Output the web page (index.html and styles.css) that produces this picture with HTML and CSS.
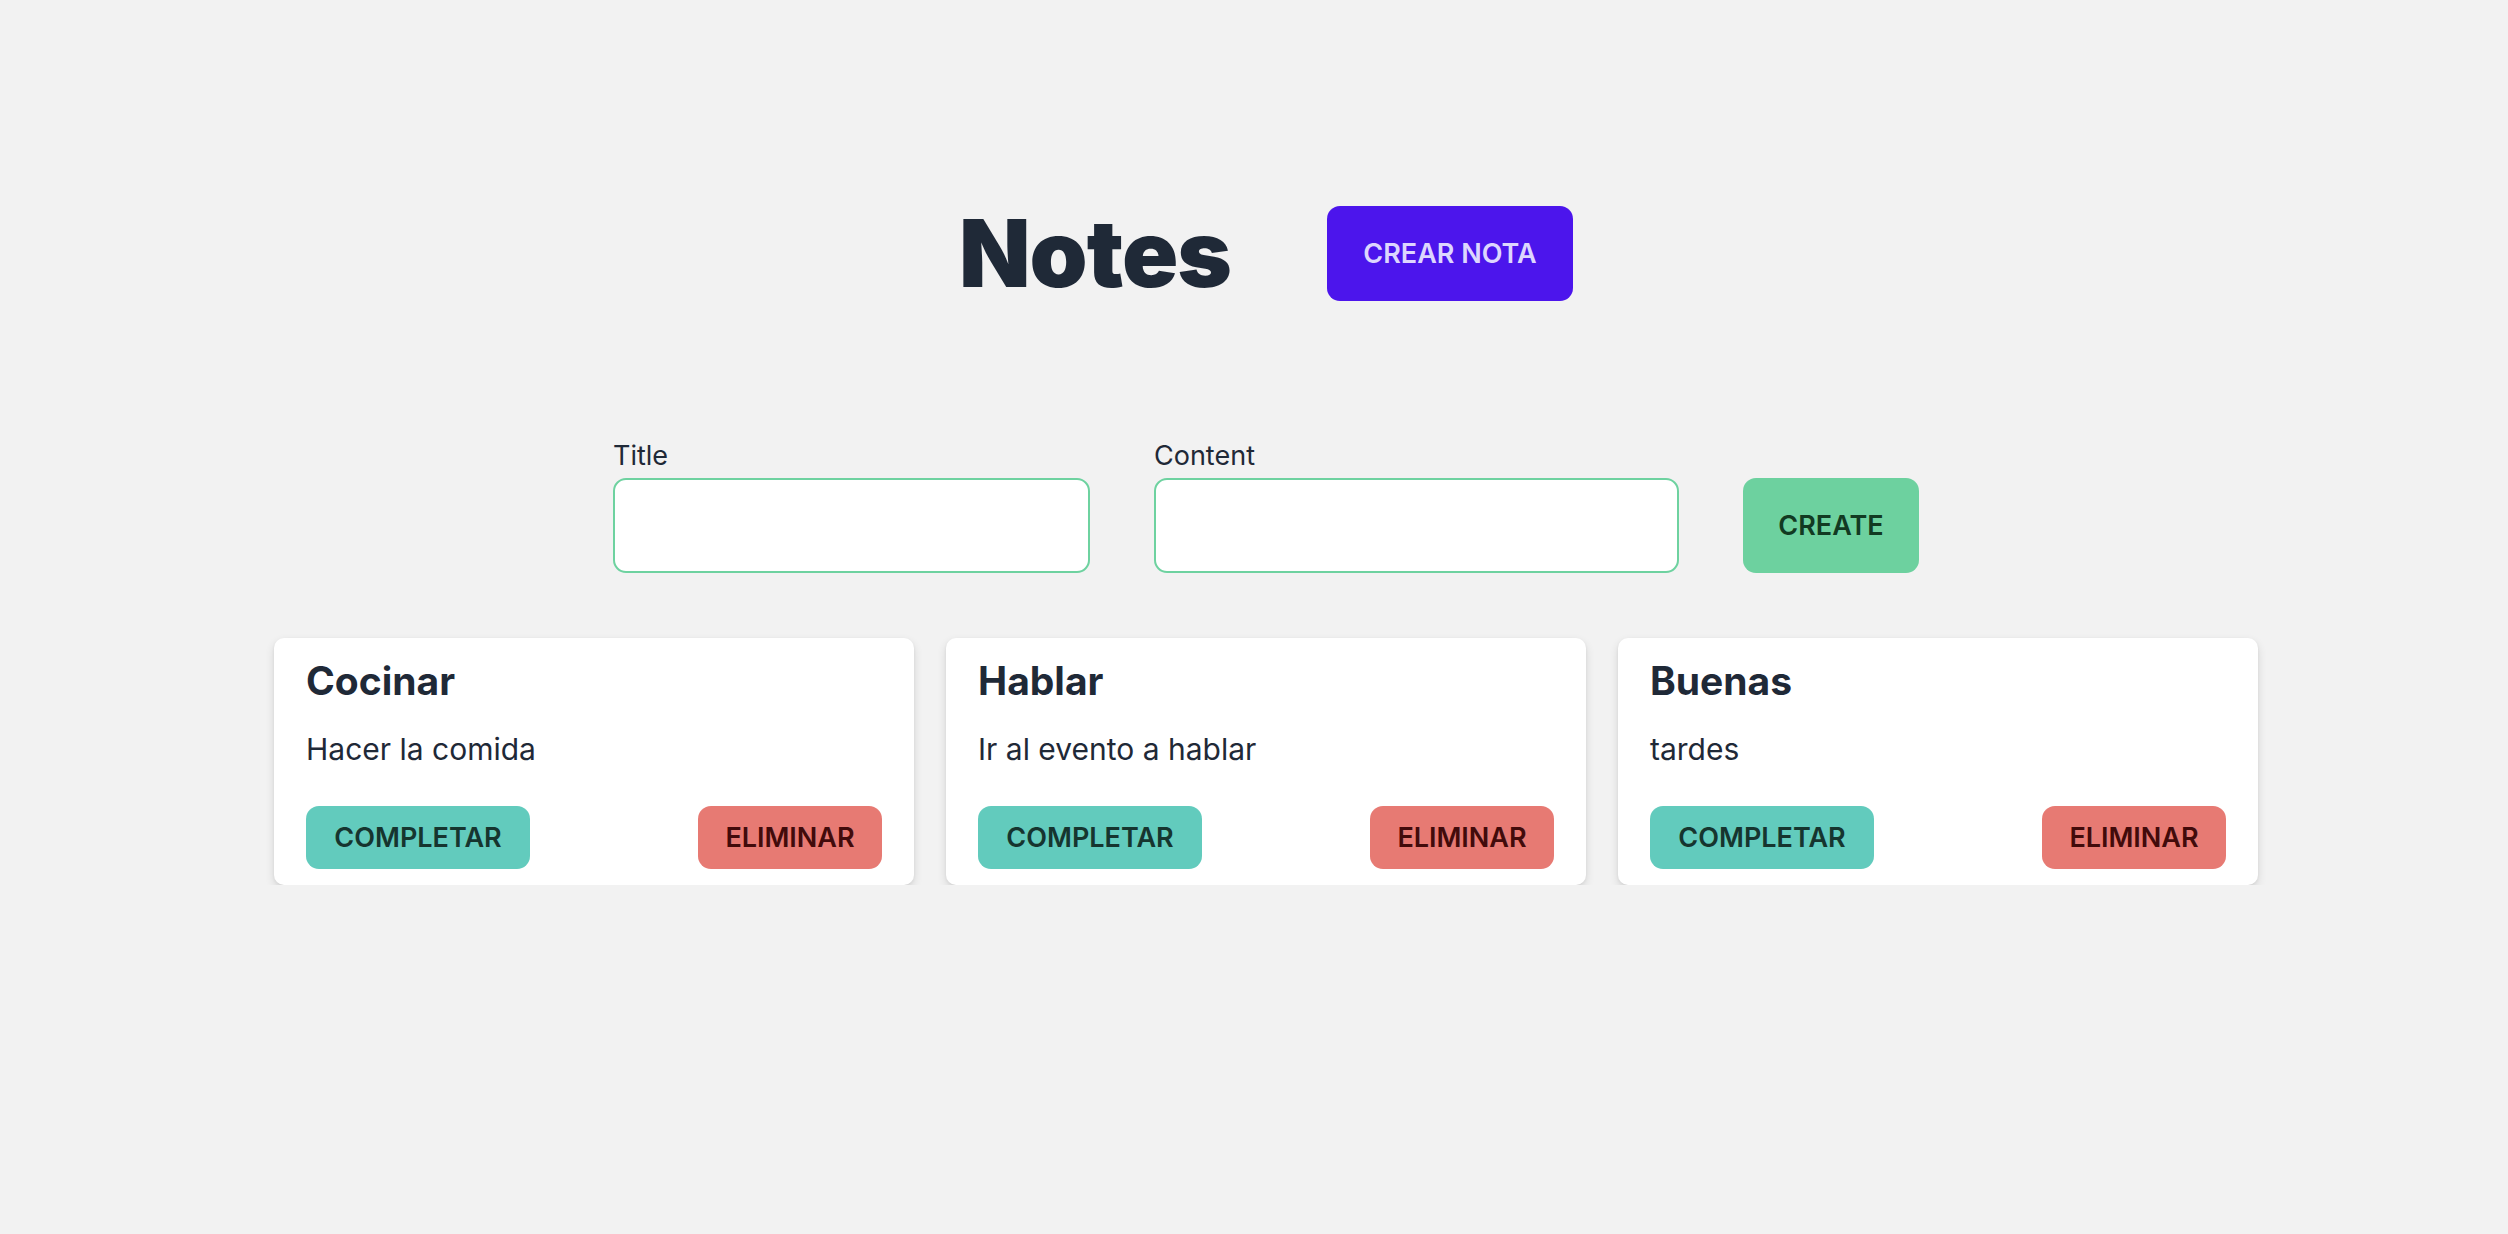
FILE: index.html
```html
<!DOCTYPE html>
<html lang="es">
<head>
<meta charset="utf-8">
<title>Notes</title>
<link rel="stylesheet" href="styles.css">
</head>
<body>
<main class="page">
  <header class="header">
    <h1 class="brand">Notes</h1>
    <button class="btn btn-primary">CREAR NOTA</button>
  </header>

  <form class="note-form">
    <div class="field field-title">
      <label class="label" for="title">Title</label>
      <input class="input" id="title" type="text">
    </div>
    <div class="field field-content">
      <label class="label" for="content">Content</label>
      <input class="input" id="content" type="text">
    </div>
    <button type="button" class="btn btn-create">CREATE</button>
  </form>

  <section class="cards">
    <article class="card">
      <h2 class="card-title">Cocinar</h2>
      <p class="card-text">Hacer la comida</p>
      <div class="card-actions">
        <button class="btn btn-complete">COMPLETAR</button>
        <button class="btn btn-delete">ELIMINAR</button>
      </div>
    </article>
    <article class="card">
      <h2 class="card-title">Hablar</h2>
      <p class="card-text">Ir al evento a hablar</p>
      <div class="card-actions">
        <button class="btn btn-complete">COMPLETAR</button>
        <button class="btn btn-delete">ELIMINAR</button>
      </div>
    </article>
    <article class="card">
      <h2 class="card-title">Buenas</h2>
      <p class="card-text">tardes</p>
      <div class="card-actions">
        <button class="btn btn-complete">COMPLETAR</button>
        <button class="btn btn-delete">ELIMINAR</button>
      </div>
    </article>
  </section>
</main>
</body>
</html>
```

FILE: styles.css
```css
* { box-sizing: border-box; }

html, body {
  margin: 0;
  padding: 0;
  background: #f2f2f2;
  font-family: Inter, "Noto Sans", "Liberation Sans", sans-serif;
  color: #1f2937;
}

.page {
  padding: 206px 0 0 24px;
  display: flex;
  flex-direction: column;
  align-items: center;
}

.header {
  display: flex;
  align-items: center;
  justify-content: center;
  gap: 96px;
  height: 95px;
}

.brand {
  margin: 0;
  font-size: 93px;
  font-weight: 900;
  line-height: 1;
  color: #1f2937;
  letter-spacing: -1px;
}

.btn {
  border: none;
  font-family: inherit;
  font-weight: 600;
  cursor: pointer;
  display: inline-flex;
  align-items: center;
  justify-content: center;
}

.btn-primary {
  width: 246px;
  height: 95px;
  border-radius: 13px;
  background: #4c15ec;
  color: #ddd6fe;
  font-size: 27px;
}

.note-form {
  margin-top: 135px;
  display: flex;
  align-items: flex-end;
  gap: 64px;
}

.field {
  display: flex;
  flex-direction: column;
}

.label {
  font-size: 27px;
  line-height: 39px;
  margin-bottom: 3px;
  color: #1f2937;
}

.input {
  height: 95px;
  border: 2px solid #6ed2a0;
  border-radius: 13px;
  background: #fff;
  font: inherit;
  font-size: 26px;
  padding: 0 20px;
  outline: none;
}

.field-title .input { width: 477px; }
.field-content .input { width: 525px; }

.btn-create {
  width: 176px;
  height: 95px;
  border-radius: 13px;
  background: #6dd19f;
  color: #123a22;
  font-size: 27px;
}

.cards {
  margin-top: 65px;
  display: grid;
  grid-template-columns: repeat(3, 640px);
  gap: 32px;
}

.card {
  background: #fff;
  border-radius: 10px;
  padding: 17px 32px 16px 32px;
  box-shadow: 0 4px 10px rgba(0, 0, 0, 0.12), 0 1px 3px rgba(0, 0, 0, 0.06);
}

.card-title {
  margin: 0;
  font-size: 39px;
  line-height: 51px;
  font-weight: 700;
  color: #1f2937;
}

.card-text {
  margin: 21px 0 0;
  font-size: 30px;
  line-height: 45px;
  color: #1f2937;
}

.card-actions {
  margin-top: 34px;
  display: flex;
  justify-content: space-between;
}

.btn-complete,
.btn-delete {
  height: 63px;
  border-radius: 13px;
  font-size: 27px;
}

.btn-complete {
  width: 224px;
  background: #62cbbd;
  color: #16352f;
}

.btn-delete {
  width: 184px;
  background: #e77a73;
  color: #420b0b;
}
```
